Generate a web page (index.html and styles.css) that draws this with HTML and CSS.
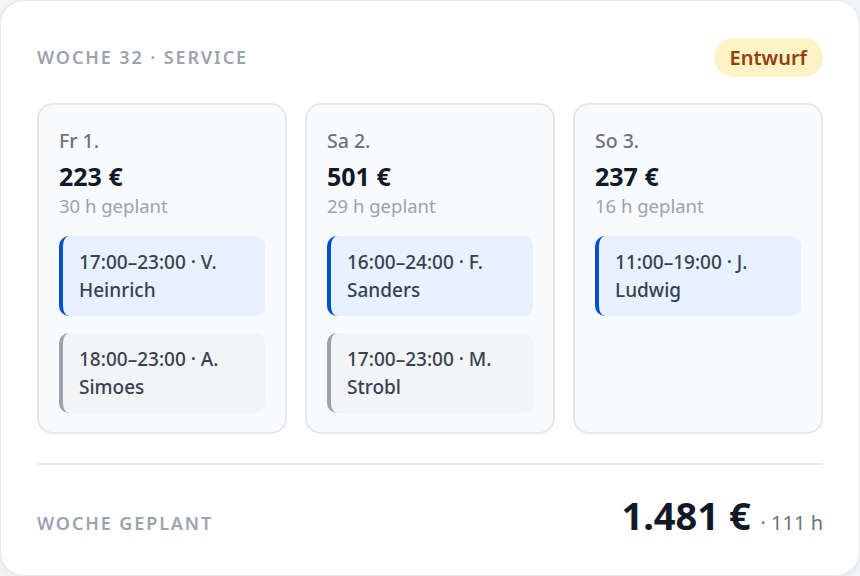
FILE: index.html
```html
<!DOCTYPE html>
<html lang="de">
  <head>
    <meta charset="UTF-8" />
    <title>Woche 32 · Service</title>
    <link rel="stylesheet" href="styles.css">
  </head>
  <body>
    <div class="week-card">
      <div class="week-head">
        <span class="eyebrow">Woche 32 · Service</span>
        <span class="badge">Entwurf</span>
      </div>

      <div class="days">
        <div class="day">
          <div class="day-name">Fr 1.</div>
          <div class="day-sum">223 €</div>
          <div class="day-hours">30 h geplant</div>
          <div class="shift confirmed">17:00–23:00 · V. Heinrich</div>
          <div class="shift pending">18:00–23:00 · A. Simoes</div>
        </div>
        <div class="day">
          <div class="day-name">Sa 2.</div>
          <div class="day-sum">501 €</div>
          <div class="day-hours">29 h geplant</div>
          <div class="shift confirmed">16:00–24:00 · F. Sanders</div>
          <div class="shift pending">17:00–23:00 · M. Strobl</div>
        </div>
        <div class="day">
          <div class="day-name">So 3.</div>
          <div class="day-sum">237 €</div>
          <div class="day-hours">16 h geplant</div>
          <div class="shift confirmed">11:00–19:00 · J. Ludwig</div>
        </div>
      </div>

      <div class="week-foot">
        <span class="eyebrow">Woche geplant</span>
        <span class="total">1.481 € <small>· 111 h</small></span>
      </div>
    </div>
  </body>
</html>
```

FILE: styles.css
```css
body {
  margin: 0;
  background: #f3f4f6;
  font-family: "Noto Sans", Arial, sans-serif;
}

.week-card {
  box-sizing: border-box;
  height: 576px;
  background: white;
  border: 1px solid #e5e7eb;
  border-radius: 24px;
  box-shadow: 0 2px 8px rgba(0, 0, 0, 0.06);
  padding: 36px 36px 0;
}

.week-head {
  display: flex;
  justify-content: space-between;
  align-items: center;
  height: 40px;
}

.eyebrow {
  font-size: 18px;
  font-weight: 600;
  letter-spacing: 0.105em;
  text-transform: uppercase;
  color: #9ca3af;
}

.badge {
  background: #fef3c7;
  color: #92400e;
  font-size: 20px;
  font-weight: 600;
  line-height: 27px;
  padding: 6px 16px;
  border-radius: 20px;
}

.days {
  display: grid;
  grid-template-columns: repeat(3, 1fr);
  gap: 18px;
  margin-top: 26px;
}

.day {
  box-sizing: border-box;
  height: 331px;
  background: #f8fafc;
  border: 2px solid #e5e7eb;
  border-radius: 16px;
  padding: 21px 20px 18px;
}

.day-name {
  font-size: 19.5px;
  font-weight: 500;
  color: #6b7280;
  line-height: 30px;
}

.day-sum {
  font-size: 25px;
  font-weight: 700;
  color: #111827;
  margin-top: 5px;
  line-height: 30px;
}

.day-hours {
  font-size: 18.5px;
  color: #9ca3af;
  line-height: 26px;
  margin-top: 2px;
  margin-bottom: 17px;
}

.shift {
  font-size: 19px;
  font-weight: 500;
  color: #374151;
  line-height: 28px;
  padding: 12px 14px 12px 16px;
  border-radius: 10px;
  border-left: 4px solid;
  margin-bottom: 17px;
}

.confirmed {
  background: #e8f1fe;
  border-color: #0052cc;
}

.pending {
  background: #f3f4f6;
  border-color: #9ca3af;
}

.week-foot {
  display: flex;
  justify-content: space-between;
  align-items: baseline;
  border-top: 2px solid #e5e7eb;
  margin-top: 29px;
  padding-top: 24px;
}

.total {
  font-size: 38px;
  font-weight: 700;
  color: #111827;
}

.total small {
  font-size: 20px;
  font-weight: 400;
  color: #6b7280;
}
```
